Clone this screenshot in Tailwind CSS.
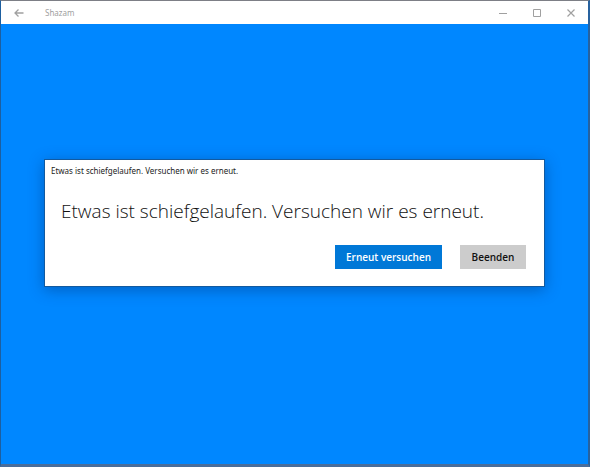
<!DOCTYPE html>
<html lang="de">
<head>
<meta charset="utf-8">
<meta name="viewport" content="width=device-width, initial-scale=1">
<title>Shazam</title>
<script src="https://cdn.jsdelivr.net/npm/@tailwindcss/browser@4"></script>
</head>
<body class="flex min-h-screen flex-col border-t border-r-2 border-b-3 border-l border-t-[#7d7f86] border-r-[#28629f] border-b-[#4a6d9a] border-l-[#1d5fa0] bg-[#0087ff] font-['Open_Sans','Noto_Sans',sans-serif]">
  <header class="flex h-[23px] items-center bg-white text-[#a0a0a0]">
    <button type="button" aria-label="Zurück" class="flex h-full w-9 items-center justify-center">
      <svg class="h-[10px] w-[10px]" viewBox="0 0 10 10" fill="none" stroke="currentColor" stroke-width="1.3" aria-hidden="true"><path d="M9.5 5H1M4.5 1.5L1 5l3.5 3.5"/></svg>
    </button>
    <h1 class="ml-2 flex-1 font-['Noto_Sans','Open_Sans',sans-serif] text-[8px] leading-3">Shazam</h1>
    <div class="flex h-full">
      <button type="button" aria-label="Minimieren" class="flex w-[34px] items-center justify-center">
        <svg class="h-2 w-2" viewBox="0 0 8 8" fill="none" stroke="currentColor" aria-hidden="true"><path d="M0 4.5h8"/></svg>
      </button>
      <button type="button" aria-label="Maximieren" class="flex w-[34px] items-center justify-center">
        <svg class="h-2 w-2" viewBox="0 0 8 8" fill="none" stroke="currentColor" aria-hidden="true"><path d="M.5.5h7v7h-7z"/></svg>
      </button>
      <button type="button" aria-label="Schließen" class="flex w-[34px] items-center justify-center">
        <svg class="h-2 w-2" viewBox="0 0 8 8" fill="none" stroke="currentColor" stroke-width="1.2" aria-hidden="true"><path d="M.5.5l7 7M7.5.5l-7 7"/></svg>
      </button>
    </div>
  </header>
  <main class="flex-1 px-[43px] pt-[135px] pb-10">
    <section role="dialog" aria-labelledby="dialog-title" aria-describedby="dialog-text" class="border border-[#125aa0] bg-white px-[6px] pt-[5px] pb-[17px] shadow-[0_3px_14px_rgba(0,40,100,0.4)]">
      <h2 id="dialog-title" class="font-['Noto_Sans','Open_Sans',sans-serif] text-[8px] leading-3 text-[#222222]">Etwas ist schiefgelaufen. Versuchen wir es erneut.</h2>
      <p id="dialog-text" class="mt-5 pl-[10px] text-[19px] leading-7 font-light text-[#111111]">Etwas ist schiefgelaufen. Versuchen wir es erneut.</p>
      <div class="mt-5 flex justify-end gap-[18px] pr-3 text-[10px] leading-3 font-semibold">
        <button type="button" class="h-6 w-[107px] bg-[#0078d7] text-white">Erneut versuchen</button>
        <button type="button" class="h-6 w-[66px] bg-[#cccccc] text-[#111111]">Beenden</button>
      </div>
    </section>
  </main>
</body>
</html>
